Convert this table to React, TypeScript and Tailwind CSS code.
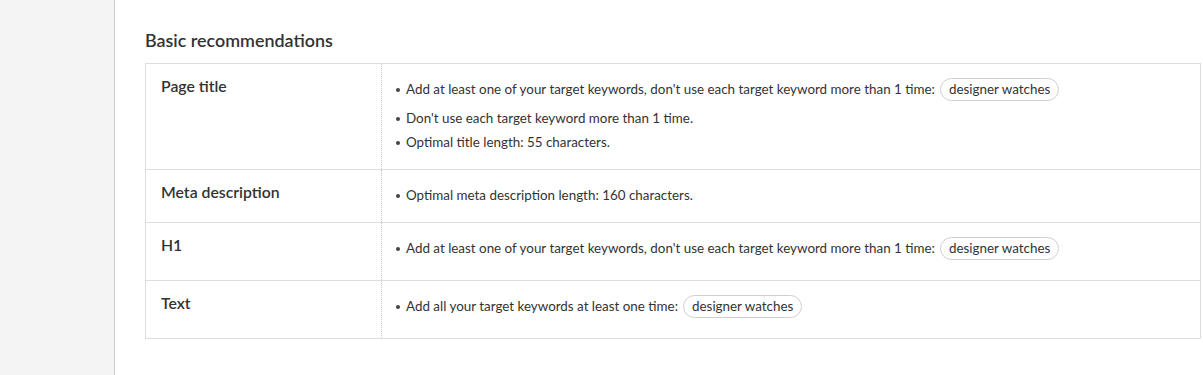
import React from "react";

const KEYWORD = "designer watches";

type Tip = { text: string; chip?: boolean };

const rows: { label: string; tips: Tip[] }[] = [
  {
    label: "Page title",
    tips: [
      { text: "Add at least one of your target keywords, don't use each target keyword more than 1 time:", chip: true },
      { text: "Don't use each target keyword more than 1 time." },
      { text: "Optimal title length: 55 characters." },
    ],
  },
  {
    label: "Meta description",
    tips: [{ text: "Optimal meta description length: 160 characters." }],
  },
  {
    label: "H1",
    tips: [{ text: "Add at least one of your target keywords, don't use each target keyword more than 1 time:", chip: true }],
  },
  {
    label: "Text",
    tips: [{ text: "Add all your target keywords at least one time:", chip: true }],
  },
];

function Chip({ children }: { children: React.ReactNode }) {
  return (
    <span className="ml-[5px] inline-flex h-[23px] shrink-0 items-center rounded-full border border-[#cfcfcf] px-[8px] text-[13.4px] text-[#333]">
      {children}
    </span>
  );
}

export default function App() {
  return (
    <div className="flex h-[375px] w-[1203px] overflow-hidden bg-white font-['Lato',sans-serif] text-[#333]">
      <aside className="w-[115px] shrink-0 border-r border-[#cbcbcb] bg-[#f4f4f4]" />
      <main className="flex-1 pl-[30px] pr-[2px] pt-[28px]">
        <h2 className="mb-[11px] text-[17.9px] leading-[24px] font-semibold">Basic recommendations</h2>
        <table className="w-full border-collapse border border-[#dedede]">
          <tbody>
            {rows.map((row) => (
              <tr key={row.label} className="border-b border-[#dedede] align-top">
                <td className="w-[236px] px-[15px] pt-[12px] text-[15.8px] leading-[20px] font-semibold">
                  {row.label}
                </td>
                <td className="border-l border-dotted border-[#c8c8c8] pl-[14px] pt-[15px] pb-[16px]">
                  <ul className="flex flex-col gap-[3px]">
                    {row.tips.map((tip, i) => (
                      <li
                        key={i}
                        className={`flex h-[21px] items-center text-[13.4px] leading-[21px] ${tip.chip ? "mb-[5px]" : ""}`}
                      >
                        <span className="mr-[6px] h-[4px] w-[4px] shrink-0 rounded-full bg-[#444]" />
                        <span>{tip.text}</span>
                        {tip.chip && <Chip>{KEYWORD}</Chip>}
                      </li>
                    ))}
                  </ul>
                </td>
              </tr>
            ))}
          </tbody>
        </table>
      </main>
    </div>
  );
}
